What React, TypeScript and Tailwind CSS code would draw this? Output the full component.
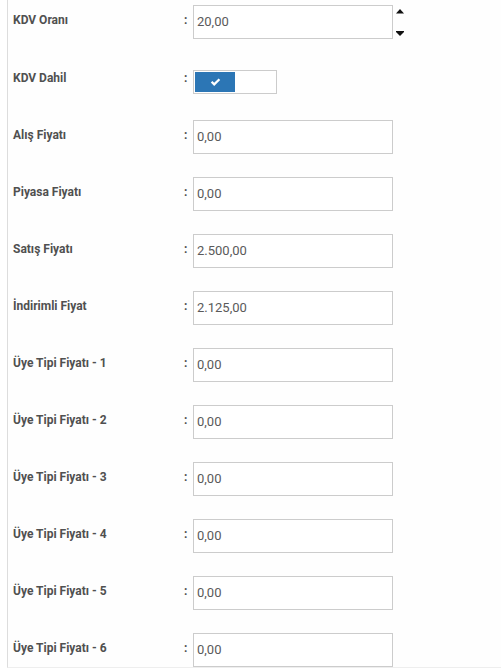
import React from "react";

const rows = [
  ["Alış Fiyatı", "0,00"],
  ["Piyasa Fiyatı", "0,00"],
  ["Satış Fiyatı", "2.500,00"],
  ["İndirimli Fiyat", "2.125,00"],
  ["Üye Tipi Fiyatı - 1", "0,00"],
  ["Üye Tipi Fiyatı - 2", "0,00"],
  ["Üye Tipi Fiyatı - 3", "0,00"],
  ["Üye Tipi Fiyatı - 4", "0,00"],
  ["Üye Tipi Fiyatı - 5", "0,00"],
  ["Üye Tipi Fiyatı - 6", "0,00"],
];

function Label({ text, pt }: { text: string; pt: string }) {
  return (
    <>
      <div className={`w-[171px] shrink-0 text-[12px] leading-[16px] font-bold text-[#505050] ${pt}`}>{text}</div>
      <div className={`w-[9px] shrink-0 text-[12px] leading-[16px] font-bold text-[#505050] ${pt}`}>:</div>
    </>
  );
}

function Box({ value }: { value: string }) {
  return (
    <div className="w-[200px] h-[34px] border border-[#ccc] bg-white flex items-center pl-[3px] text-[13px] text-[#5a5a5a]">
      {value}
    </div>
  );
}

export default function App() {
  return (
    <div
      className="w-[501px] h-[670px] bg-white overflow-hidden"
      style={{ fontFamily: "Roboto, 'Liberation Sans', sans-serif" }}
    >
      <div className="ml-[7px] w-[494px] h-[668px] border-l border-[#ddd] bg-[#fefefe] border-b border-b-[#eee] pl-[5px] pt-[5px]">
        <div className="flex h-[65px]">
          <Label text="KDV Oranı" pt="pt-[7px]" />
          <Box value="20,00" />
          <div className="relative w-[12px] h-[34px]">
            <svg className="absolute left-[3px] top-[4px]" width="8" height="5" viewBox="0 0 8 5">
              <path d="M4 0 L8 4.5 L0 4.5 Z" fill="#111" />
            </svg>
            <svg className="absolute left-[3px] top-[26px]" width="8" height="5" viewBox="0 0 8 5">
              <rect x="0" y="0" width="8" height="1" fill="#111" />
              <path d="M0 1 L8 1 L4 5 Z" fill="#111" />
            </svg>
          </div>
        </div>
        <div className="flex h-[50px]">
          <Label text="KDV Dahil" pt="pt-0" />
          <div className="w-[84px] h-[24px] border border-[#ccc] bg-white p-[1px]">
            <div className="w-[40px] h-[20px] bg-[#2c76b5] flex items-center justify-center">
              <svg width="11" height="9" viewBox="0 0 11 9">
                <path d="M0.8 4.6 L2.4 3 L4.2 4.8 L8.6 0.4 L10.2 2 L4.2 8 Z" fill="#fff" />
              </svg>
            </div>
          </div>
        </div>
        {rows.map(([l, v]) => (
          <div key={l} className="flex h-[57px]">
            <Label text={l} pt="pt-[7px]" />
            <Box value={v} />
          </div>
        ))}
      </div>
    </div>
  );
}
